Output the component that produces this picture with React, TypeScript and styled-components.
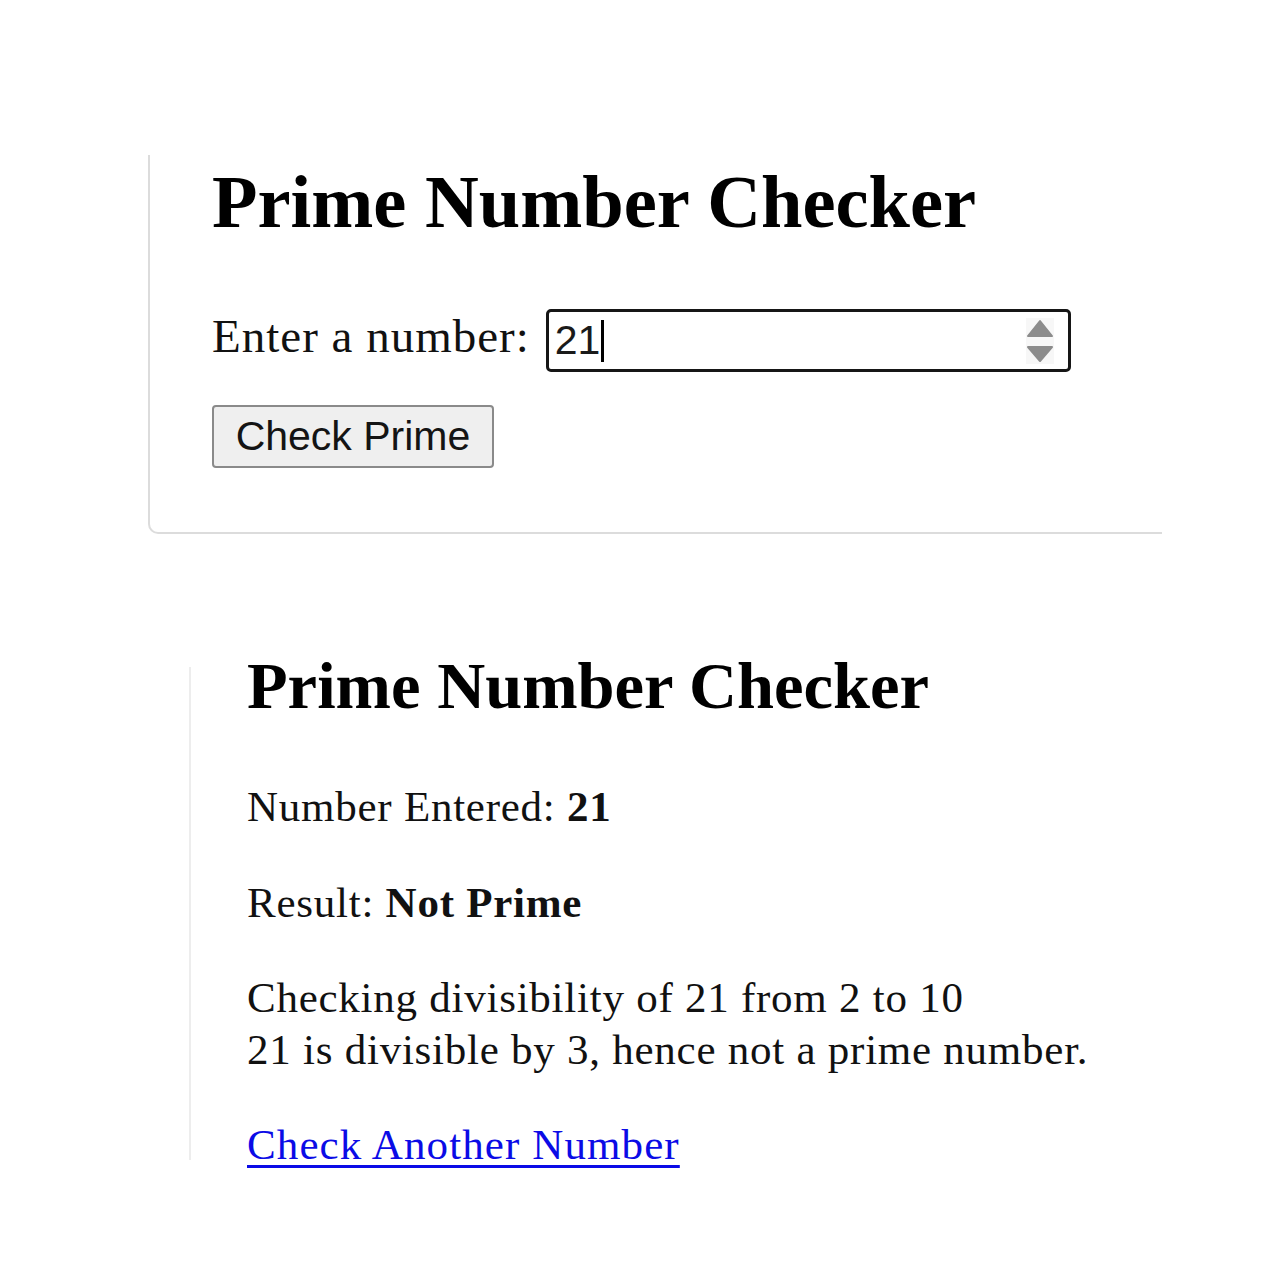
import styled, { createGlobalStyle } from 'styled-components'

const GlobalStyle = createGlobalStyle`
  body {
    margin: 0;
    background: #ffffff;
    color: #111111;
    font-family: 'Liberation Serif', 'Times New Roman', serif;
  }
`

const Page = styled.div`
  display: flex;
  flex-direction: column;
  padding-top: 155px;
  min-height: 1280px;
  box-sizing: border-box;
`

const FormCard = styled.section`
  margin-left: 148px;
  width: 1014px;
  box-sizing: border-box;
  padding: 10px 0 64px 62px;
  border-left: 2px solid #dcdcdc;
  border-bottom: 2px solid #dcdcdc;
  border-bottom-left-radius: 10px;
`

const Title = styled.h1<{ $size: number }>`
  margin: 0;
  font-size: ${({ $size }) => $size}px;
  line-height: ${({ $size }) => Math.round($size)}px;
  font-weight: 700;
  color: #000;
  white-space: nowrap;
`

const FieldRow = styled.div`
  display: flex;
  align-items: flex-start;
  gap: 16px;
  margin-top: 69px;
`

const Label = styled.label`
  font-size: 47px;
  line-height: 55px;
  letter-spacing: 1px;
  white-space: nowrap;
`

const NumberField = styled.div`
  display: flex;
  align-items: center;
  width: 525px;
  height: 63px;
  box-sizing: border-box;
  border: 3px solid #161616;
  border-radius: 5px;
  padding: 0 14px 0 6px;
  font-family: 'Liberation Sans', Arial, sans-serif;
  font-size: 41px;
  color: #1a1a1a;
`

const Value = styled.span`
  line-height: 1;
`

const Caret = styled.span`
  display: inline-block;
  width: 3px;
  height: 42px;
  margin-left: 1px;
  background: #000;
`

const Spacer = styled.span`
  flex: 1;
`

const Spinner = styled.svg`
  width: 28px;
  height: 46px;
  background: #f7f7f7;
`

const CheckButton = styled.button`
  margin-top: 33px;
  width: 282px;
  height: 63px;
  background: #efefef;
  border: 2px solid #8a8a8a;
  border-radius: 4px;
  font-family: 'Liberation Sans', Arial, sans-serif;
  font-size: 41px;
  color: #141414;
  padding: 0;
`

const ResultSection = styled.section`
  margin-top: 118px;
  margin-left: 189px;
  padding-left: 58px;
  background: linear-gradient(#ededed, #ededed) no-repeat 0 15px / 2px 493px;
`

const Line = styled.p<{ $gap: number }>`
  margin: ${({ $gap }) => $gap}px 0 0;
  font-size: 43px;
  line-height: 52px;
  letter-spacing: 0.75px;
  white-space: nowrap;
`

const Link = styled.a`
  color: #0b0be6;
  letter-spacing: 1.1px;
  text-decoration: underline;
  text-decoration-thickness: 3px;
  text-underline-offset: 6px;
`

export default function App() {
  return (
    <>
      <GlobalStyle />
      <Page>
        <FormCard>
          <Title $size={74.5}>Prime Number Checker</Title>
          <FieldRow>
            <Label>Enter a number:</Label>
            <NumberField>
              <Value>21</Value>
              <Caret />
              <Spacer />
              <Spinner viewBox="0 0 28 46">
                <path d="M14 3 L26 18 L2 18 Z" fill="#8c8c8c" stroke="#8c8c8c" strokeWidth="2" strokeLinejoin="round" />
                <path d="M2 29 L26 29 L14 43 Z" fill="#8c8c8c" stroke="#8c8c8c" strokeWidth="2" strokeLinejoin="round" />
              </Spinner>
            </NumberField>
          </FieldRow>
          <CheckButton type="button">Check Prime</CheckButton>
        </FormCard>

        <ResultSection>
          <Title $size={66.5}>Prime Number Checker</Title>
          <Line $gap={62}>
            Number Entered: <strong>21</strong>
          </Line>
          <Line $gap={44}>
            Result: <strong>Not Prime</strong>
          </Line>
          <Line $gap={43}>
            Checking divisibility of 21 from 2 to 10
            <br />
            21 is divisible by 3, hence not a prime number.
          </Line>
          <Line $gap={43}>
            <Link href="#">Check Another Number</Link>
          </Line>
        </ResultSection>
      </Page>
    </>
  )
}
